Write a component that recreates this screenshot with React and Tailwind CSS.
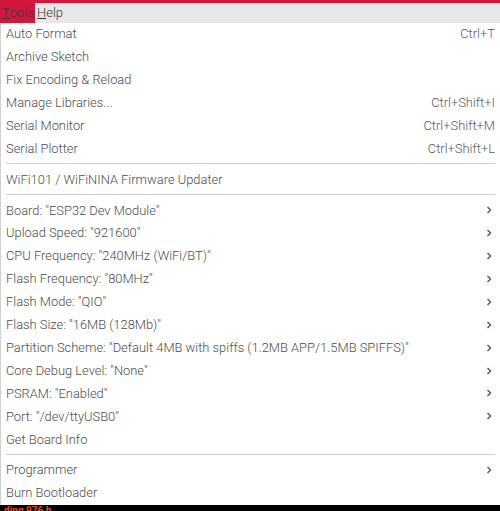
import React from 'react';

const groups = [
  [
    { label: 'Auto Format', shortcut: 'Ctrl+T' },
    { label: 'Archive Sketch' },
    { label: 'Fix Encoding & Reload' },
    { label: 'Manage Libraries...', shortcut: 'Ctrl+Shift+I' },
    { label: 'Serial Monitor', shortcut: 'Ctrl+Shift+M' },
    { label: 'Serial Plotter', shortcut: 'Ctrl+Shift+L' },
  ],
  [{ label: 'WiFi101 / WiFiNINA Firmware Updater' }],
  [
    { label: 'Board: "ESP32 Dev Module"', sub: true },
    { label: 'Upload Speed: "921600"', sub: true },
    { label: 'CPU Frequency: "240MHz (WiFi/BT)"', sub: true },
    { label: 'Flash Frequency: "80MHz"', sub: true },
    { label: 'Flash Mode: "QIO"', sub: true },
    { label: 'Flash Size: "16MB (128Mb)"', sub: true },
    { label: 'Partition Scheme: "Default 4MB with spiffs (1.2MB APP/1.5MB SPIFFS)"', sub: true },
    { label: 'Core Debug Level: "None"', sub: true },
    { label: 'PSRAM: "Enabled"', sub: true },
    { label: 'Port: "/dev/ttyUSB0"', sub: true },
    { label: 'Get Board Info' },
  ],
  [
    { label: 'Programmer', sub: true },
    { label: 'Burn Bootloader' },
  ],
];

function MenuItem({ item }) {
  return (
    <div className="flex items-center justify-between h-[22.9px] pl-[5px] pr-[5px] text-[12.9px] text-[#4d4d4d]">
      <span>{item.label}</span>
      {item.shortcut && <span className="text-[#5a5a5a]">{item.shortcut}</span>}
      {item.sub && (
        <svg width="6" height="8" viewBox="0 0 6 8" className="mr-[3px]">
          <path d="M1.5 1 L4.5 4 L1.5 7" fill="none" stroke="#555" strokeWidth="1.4" />
        </svg>
      )}
    </div>
  );
}

export default function App() {
  return (
    <div className="flex flex-col w-[500px] h-[511px] bg-white overflow-hidden" style={{ fontFamily: 'Roboto, "Liberation Sans", sans-serif' }}>
      {/* top strip */}
      <div className="h-[3px] bg-[#d4163c]" />
      {/* menubar */}
      <div className="flex items-center h-[19.6px] bg-[#e8e8e8] text-[13px] font-light text-[#3a3a3a]">
        <span className="h-full flex items-center px-[2px] bg-[#d4163c] w-[35px]">
          <span className="underline">T</span>ools
        </span>
        <span className="px-[2px]">
          <span className="underline">H</span>elp
        </span>
      </div>
      {/* dropdown */}
      <div className="flex-1 border-l border-[#d0d0d0] font-light">
        {groups.map((g, gi) => (
          <div key={gi}>
            {gi > 0 && <div className="mt-[3px] mb-[4px] mx-[5px] h-px bg-[#cfcfcf]" />}
            {g.map(item => (
              <MenuItem key={item.label} item={item} />
            ))}
          </div>
        ))}
      </div>
      {/* bottom strip */}
      <div className="h-[6px] bg-black overflow-hidden">
        <div className="pl-[4px] pt-[1px] text-[10px] leading-[10px] font-bold text-[#e8461c] whitespace-nowrap">ding 976 b</div>
      </div>
    </div>
  );
}
